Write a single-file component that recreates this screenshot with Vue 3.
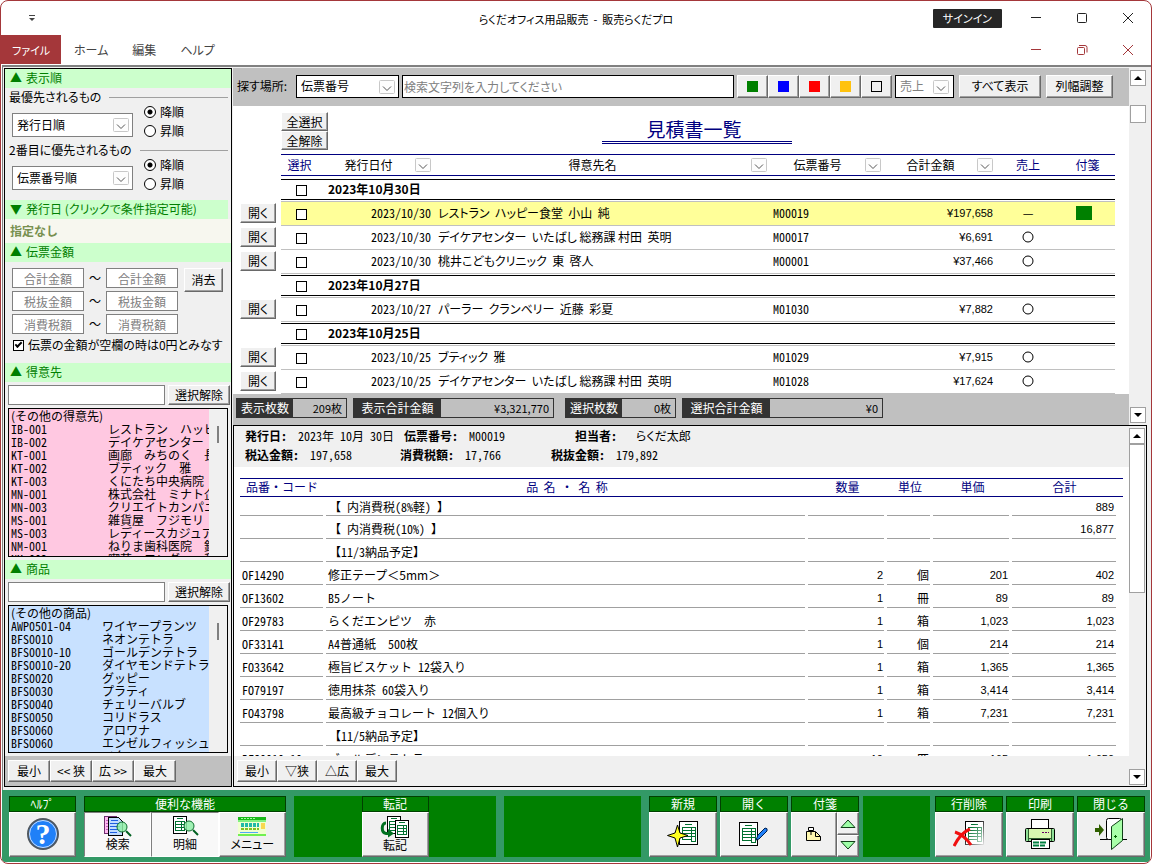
<script setup>
import { ref } from 'vue'

const place = ref('伝票番号')
const keyword = ref('')
const blankIsZero = ref(true)

const sorts = ref([
    { id: 'first', title: '最優先されるもの', field: '発行日順', order: 'desc' },
    { id: 'second', title: '2番目に優先されるもの', field: '伝票番号順', order: 'desc' },
])

const amounts = ['合計金額', '税抜金額', '消費税額']

const customers = [
    ['IB-001', 'レストラン　ハッピー食堂'],
    ['IB-002', 'デイケアセンター　いたばし'],
    ['KT-001', '画廊　みちのく　長谷川'],
    ['KT-002', 'ブティック　雅'],
    ['KT-003', 'くにたち中央病院'],
    ['MN-001', '株式会社　ミナト企画'],
    ['MN-003', 'クリエイトカンパニー'],
    ['MS-001', '雑貨屋　フジモリ'],
    ['MS-003', 'レディースカジュアル'],
    ['NM-001', 'ねりま歯科医院　鈴木'],
    ['NM-002', '喫茶　ロンダー　和'],
]

const products = [
    ['AWP0501-04', 'ワイヤープランツ'],
    ['BFS0010', 'ネオンテトラ'],
    ['BFS0010-10', 'ゴールデンテトラ'],
    ['BFS0010-20', 'ダイヤモンドテトラ'],
    ['BFS0020', 'グッピー'],
    ['BFS0030', 'プラティ'],
    ['BFS0040', 'チェリーバルブ'],
    ['BFS0050', 'コリドラス'],
    ['BFS0060', 'アロワナ'],
    ['BFS0060', 'エンゼルフィッシュ'],
    ['BFS0070', 'ベタ'],
]

const tagColors = ['green', 'blue', 'red', 'yellow', 'none']

const headers = ['発行日付', '得意先名', '伝票番号', '合計金額']

const slips = [
    { group: '2023年10月30日' },
    { date: '2023/10/30', name: 'レストラン  ハッピー食堂  小山  純', no: 'M00019', total: '197,658', sold: '—', tag: true, current: true },
    { date: '2023/10/30', name: 'デイケアセンター  いたばし 総務課 村田  英明', no: 'M00017', total: '6,691', sold: '○' },
    { date: '2023/10/30', name: '桃井こどもクリニック  東  啓人', no: 'M00001', total: '37,466', sold: '○' },
    { group: '2023年10月27日' },
    { date: '2023/10/27', name: 'パーラー  クランベリー  近藤  彩夏', no: 'M01030', total: '7,882', sold: '○' },
    { group: '2023年10月25日' },
    { date: '2023/10/25', name: 'ブティック  雅', no: 'M01029', total: '7,915', sold: '○' },
    { date: '2023/10/25', name: 'デイケアセンター  いたばし 総務課 村田  英明', no: 'M01028', total: '17,624', sold: '○' },
]

const totals = [
    { label: '表示枚数', value: '209枚' },
    { label: '表示合計金額', value: '¥3,321,770', wide: true },
    { label: '選択枚数', value: '0枚', gap: true },
    { label: '選択合計金額', value: '¥0', wide: true },
]

const items = [
    { name: '【 内消費税(8%軽) 】', sum: '889', note: true },
    { name: '【 内消費税(10%) 】', sum: '16,877', note: true },
    { name: '【11/3納品予定】', note: true },
    { code: 'OF14290', name: '修正テープ＜5mm＞', qty: '2', unit: '個', price: '201', sum: '402', full: true },
    { code: 'OF13602', name: 'B5ノート', qty: '1', unit: '冊', price: '89', sum: '89' },
    { code: 'OF29783', name: 'らくだエンピツ  赤', qty: '1', unit: '箱', price: '1,023', sum: '1,023' },
    { code: 'OF33141', name: 'A4普通紙  500枚', qty: '1', unit: '個', price: '214', sum: '214' },
    { code: 'FO33642', name: '極旨ビスケット 12袋入り', qty: '1', unit: '箱', price: '1,365', sum: '1,365' },
    { code: 'FO79197', name: '徳用抹茶 60袋入り', qty: '1', unit: '箱', price: '3,414', sum: '3,414' },
    { code: 'FO43798', name: '最高級チョコレート 12個入り', qty: '1', unit: '箱', price: '7,231', sum: '7,231' },
    { name: '【11/5納品予定】', note: true },
    { code: 'BFS0010-10', name: 'ゴールデンテトラ', qty: '10', unit: '匹', price: '165', sum: '1,650' },
]
</script>

<template>
    <div class="window">
        <svg class="defs" width="0" height="0" aria-hidden="true">
            <symbol id="sheet" viewBox="0 0 19 24">
                <g shape-rendering="crispEdges">
                    <rect x="0.5" y="0.5" width="18" height="23" fill="#fff" stroke="#000" />
                    <path d="M6 3.5h7M3 6.5h13M3 9.5h13M3 12.5h13M3 15.5h13M3 18.5h9M3.5 6v13M12.5 6v15M16.5 6v15M12 20.5h5" fill="none" stroke="#007030" />
                </g>
            </symbol>
            <symbol id="sheet-small" viewBox="0 0 14 18">
                <g shape-rendering="crispEdges">
                    <rect x="0.5" y="0.5" width="13" height="17" fill="#fff" stroke="#000" />
                    <path d="M4 2.5h6M2 5.5h10M2 8.5h10M2 11.5h10M2 14.5h10M2.500 5v10M8.500 5v10M11.500 5v10" fill="none" stroke="#007030" />
                </g>
            </symbol>
            <symbol id="lens" viewBox="0 0 16 16">
                <path d="M10 10l5 5" stroke="#006020" stroke-width="2" />
                <circle cx="6" cy="6" r="5" fill="#90f0a8" fill-opacity="0.85" stroke="#107030" />
            </symbol>
            <symbol id="chevron" viewBox="0 0 16 14">
                <rect x="0.5" y="0.5" width="15" height="13" rx="1" fill="#fdfdfd" stroke="#c8c8c8" />
                <path d="M4 6.5l4 4 4-4" fill="none" stroke="#555" />
            </symbol>
        </svg>

        <header class="titlebar">
            <svg class="quick" width="6" height="7"><path d="M0 0.5h6" stroke="#444" /><path d="M0 3h6L3 6z" fill="#444" /></svg>
            <h1>らくだオフィス用品販売&nbsp; -&nbsp; 販売らくだプロ</h1>
            <div class="win-buttons">
                <button class="signin">サインイン</button>
                <button aria-label="最小化"><svg width="12" height="12"><path d="M1 5.5h10" stroke="#222" /></svg></button>
                <button aria-label="最大化"><svg width="12" height="12"><rect x="1.5" y="1.5" width="9" height="9" rx="1" fill="none" stroke="#222" /></svg></button>
                <button aria-label="終了"><svg width="12" height="12"><path d="M1 1l10 10M11 1L1 11" stroke="#222" /></svg></button>
            </div>
        </header>
        <nav class="menubar">
            <button class="file">ファイル</button>
            <button>ホーム</button>
            <button>編集</button>
            <button>ヘルプ</button>
            <div class="win-buttons">
                <button aria-label="子を最小化"><svg width="12" height="12"><path d="M1 5.5h10" stroke="#a4373a" /></svg></button>
                <button aria-label="元に戻す"><svg width="12" height="12"><path d="M3 1.5h6a2 2 0 0 1 2 2v5" fill="none" stroke="#a4373a" /><rect x="1.5" y="3.5" width="7" height="7" rx="1" fill="none" stroke="#a4373a" /></svg></button>
                <button aria-label="閉じる"><svg width="12" height="12"><path d="M1 1l10 10M11 1L1 11" stroke="#a4373a" /></svg></button>
            </div>
        </nav>

        <main class="workspace">
            <aside class="sidebar">
                <h2 class="section"><span>▲</span>表示順</h2>
                <fieldset v-for="s in sorts" :key="s.id" class="sort">
                    <legend>{{ s.title }}</legend>
                    <div class="sort-row">
                        <span class="combo gray">
                            <select v-model="s.field" :aria-label="s.title">
                                <option>{{ s.field }}</option>
                            </select>
                            <svg width="16" height="14"><use href="#chevron" /></svg>
                        </span>
                        <span class="radios">
                            <label><input v-model="s.order" type="radio" :name="s.id" value="desc">降順</label>
                            <label><input v-model="s.order" type="radio" :name="s.id" value="asc">昇順</label>
                        </span>
                    </div>
                </fieldset>

                <h2 class="section issue"><span>▼</span>発行日 (クリックで条件指定可能)</h2>
                <p class="unset">指定なし</p>
                <h2 class="section"><span>▲</span>伝票金額</h2>
                <div class="ranges">
                    <div class="range-list">
                        <div v-for="a in amounts" :key="a" class="range">
                            <input :placeholder="a" :aria-label="a + ' 下限'">
                            <span>～</span>
                            <input :placeholder="a" :aria-label="a + ' 上限'">
                        </div>
                    </div>
                    <button class="btn clear">消去</button>
                </div>
                <label class="zero"><input v-model="blankIsZero" type="checkbox" class="tick"><span>伝票の金額が空欄の時は0円とみなす</span></label>

                <h2 class="section"><span>▲</span>得意先</h2>
                <div class="finder">
                    <input aria-label="得意先">
                    <button class="btn">選択解除</button>
                </div>
                <div class="listbox pink">
                    <ul>
                        <li>(その他の得意先)</li>
                        <li v-for="c in customers" :key="c[0]"><span>{{ c[0] }}</span>{{ c[1] }}</li>
                    </ul>
                    <i class="thumb"></i>
                </div>

                <h2 class="section"><span>▲</span>商品</h2>
                <div class="finder">
                    <input aria-label="商品">
                    <button class="btn">選択解除</button>
                </div>
                <div class="listbox sky">
                    <ul>
                        <li>(その他の商品)</li>
                        <li v-for="(p, i) in products" :key="i"><span>{{ p[0] }}</span>{{ p[1] }}</li>
                    </ul>
                    <i class="thumb"></i>
                </div>
                <div class="sizer dark">
                    <button class="btn">最小</button>
                    <button class="btn">&lt;&lt; 狭</button>
                    <button class="btn">広 &gt;&gt;</button>
                    <button class="btn">最大</button>
                </div>
            </aside>

            <div class="panes">
                <section class="upper">
                    <div class="upper-main">
                        <div class="toolbar">
                            <label for="place">探す場所:</label>
                            <span class="combo place">
                                <select id="place" v-model="place"><option>伝票番号</option></select>
                                <svg width="16" height="14"><use href="#chevron" /></svg>
                            </span>
                            <input v-model="keyword" class="search" placeholder="検索文字列を入力してください" aria-label="検索文字列">
                            <span class="tags">
                                <button v-for="c in tagColors" :key="c" class="btn" :aria-label="c"><i :class="['swatch', c]"></i></button>
                            </span>
                            <span class="combo sold">
                                <select aria-label="売上"><option>売上</option></select>
                                <svg width="16" height="14"><use href="#chevron" /></svg>
                            </span>
                            <button class="btn show-all">すべて表示</button>
                            <button class="btn fit">列幅調整</button>
                        </div>

                        <div class="list-head">
                            <div class="select-all">
                                <button class="btn">全選択</button>
                                <button class="btn">全解除</button>
                            </div>
                            <h2>見積書一覧</h2>
                        </div>

                        <div class="slips-wrap">
                            <table class="slips">
                                <colgroup>
                                    <col class="c-open"><col class="c-check"><col class="c-date"><col>
                                    <col class="c-no"><col class="c-total"><col class="c-sold"><col class="c-tag">
                                </colgroup>
                                <thead>
                                    <tr>
                                        <td></td>
                                        <th class="navy pick">選択</th>
                                        <th v-for="h in headers" :key="h">
                                            <div class="filter">
                                                <span>{{ h }}</span>
                                                <button :aria-label="h"><svg width="16" height="14"><use href="#chevron" /></svg></button>
                                            </div>
                                        </th>
                                        <th class="navy">売上</th>
                                        <th class="navy">付箋</th>
                                    </tr>
                                </thead>
                                <tbody>
                                    <tr class="spacer"><td colspan="8"></td></tr>
                                    <template v-for="(s, i) in slips" :key="i">
                                        <tr v-if="s.group" class="group">
                                            <td></td>
                                            <td><div class="band mid"><input type="checkbox" class="tick" :aria-label="s.group"></div></td>
                                            <td colspan="6"><div class="band">{{ s.group }}</div></td>
                                        </tr>
                                        <tr v-else :class="['slip', { current: s.current }]">
                                            <td class="open"><button class="btn">開く</button></td>
                                            <td class="mid"><input type="checkbox" class="tick" :aria-label="s.no"></td>
                                            <td class="right half">{{ s.date }}</td>
                                            <td class="name">{{ s.name }}</td>
                                            <td class="half">{{ s.no }}</td>
                                            <td class="right num">¥{{ s.total }}</td>
                                            <td class="mid">
                                                <svg v-if="s.sold === '○'" class="mark" width="12" height="12" role="img" aria-label="済"><circle cx="6" cy="6" r="5" fill="none" stroke="#000" /></svg>
                                                <template v-else>{{ s.sold }}</template>
                                            </td>
                                            <td class="mid"><i v-if="s.tag" class="flag"></i></td>
                                        </tr>
                                    </template>
                                </tbody>
                            </table>
                        </div>

                        <dl class="totals">
                            <div v-for="t in totals" :key="t.label" :class="{ wide: t.wide, gap: t.gap }">
                                <dt>{{ t.label }}</dt>
                                <dd>{{ t.value }}</dd>
                            </div>
                        </dl>
                    </div>
                    <div class="scrollbar">
                        <button aria-label="上へ"><svg width="8" height="4"><path d="M0 4L4 0l4 4z" /></svg></button>
                        <i class="grip short"></i>
                        <button class="down" aria-label="下へ"><svg width="8" height="4"><path d="M0 0h8L4 4z" /></svg></button>
                    </div>
                </section>

                <section class="lower">
                    <div class="lower-main">
                        <div class="summary">
                            <p><b>発行日:</b><span class="w-date">2023年 10月 30日</span><b>伝票番号:</b><span class="w-no">M00019</span><b>担当者:</b><span class="staff">らくだ太郎</span></p>
                            <p><b>税込金額:</b><span class="w-in">197,658</span><b>消費税額:</b><span class="w-tax">17,766</span><b>税抜金額:</b><span>179,892</span></p>
                        </div>
                        <div class="items-wrap">
                            <table class="items">
                                <colgroup>
                                    <col class="i-code"><col><col class="i-qty"><col class="i-unit"><col class="i-qty"><col class="i-sum">
                                </colgroup>
                                <thead>
                                    <tr>
                                        <th class="left">品番・コード</th>
                                        <th>品&nbsp; 名&nbsp; ・&nbsp; 名&nbsp; 称</th>
                                        <th>数量</th>
                                        <th>単位</th>
                                        <th>単価</th>
                                        <th class="total">合計</th>
                                    </tr>
                                </thead>
                                <tbody>
                                    <tr v-for="(r, i) in items" :key="i">
                                        <td class="half">{{ r.code }}</td>
                                        <td :class="['title', { half: !r.full, note: r.note }]">{{ r.name }}</td>
                                        <td class="right num">{{ r.qty }}</td>
                                        <td class="right">{{ r.unit }}</td>
                                        <td class="right num">{{ r.price }}</td>
                                        <td class="right num sum">{{ r.sum }}</td>
                                    </tr>
                                </tbody>
                            </table>
                        </div>
                        <div class="sizer">
                            <button class="btn">最小</button>
                            <button class="btn">▽狭</button>
                            <button class="btn">△広</button>
                            <button class="btn">最大</button>
                        </div>
                    </div>
                    <div class="scrollbar">
                        <button aria-label="上へ"><svg width="8" height="4"><path d="M0 4L4 0l4 4z" /></svg></button>
                        <i class="grip long"></i>
                        <button class="down" aria-label="下へ"><svg width="8" height="4"><path d="M0 0h8L4 4z" /></svg></button>
                    </div>
                </section>
            </div>
        </main>

        <footer class="commands">
            <div class="module">
                <h3>ﾍﾙﾌﾟ</h3>
                <div class="keys">
                    <button class="btn" aria-label="ヘルプ">
                        <svg width="34" height="34">
                            <circle cx="17" cy="17" r="15" fill="#2080f8" stroke="#505860" stroke-width="2" />
                            <circle cx="17" cy="17" r="13.5" fill="none" stroke="#c8dcf8" />
                            <text x="17" y="27" text-anchor="middle" fill="#fff" font-family="Liberation Serif, serif" font-weight="bold" font-size="30">?</text>
                        </svg>
                    </button>
                </div>
            </div>
            <div class="module triple">
                <h3>便利な機能</h3>
                <div class="keys">
                    <button class="btn pressed">
                        <svg width="28" height="21">
                            <g shape-rendering="crispEdges">
                                <rect x="0.5" y="0.5" width="12" height="17" fill="#ffb8f0" stroke="#703070" />
                                <path d="M2 4.5h2M2 7.5h2M2 10.5h2M2 13.5h2" stroke="#c060c0" />
                                <path d="M4.5 1.500h10l4 4v14h-14z" fill="#c0dcff" stroke="#000" />
                                <path d="M7 4.5h7M6 7.5h10M6 10.5h10M6 13.5h10M6 16.5h7" stroke="#2060e0" />
                            </g>
                            <use href="#lens" x="12" y="5" width="16" height="16" />
                        </svg>
                        検索
                    </button>
                    <button class="btn pressed">
                        <svg width="28" height="21">
                            <use href="#sheet-small" x="2" y="0" width="14" height="18" />
                            <use href="#lens" x="12" y="4" width="16" height="16" />
                        </svg>
                        明細
                    </button>
                    <button class="btn">
                        <svg width="28" height="20">
                            <path fill="#f0ffd0" d="M0 0h28v19H0z" />
                            <path fill="#18b818" d="M0 0h28v3H0z" />
                            <path fill="#80f080" d="M0 3h28v2H0z" />
                            <path d="M3 1.5h15" stroke="#a0ffa0" stroke-dasharray="2 1" />
                            <path d="M3 8h18" stroke="#20b8a8" stroke-width="4" stroke-dasharray="3 1" />
                            <path d="M3 12h18" stroke="#80c020" stroke-width="2" stroke-dasharray="3 1" />
                            <path fill="#f8d850" d="M23 6h4v6h-4z" />
                            <path fill="#50a8f8" d="M2 15h18v1H2z" />
                            <path fill="#70f050" d="M0 17h28v2H0z" />
                        </svg>
                        メニュー
                    </button>
                </div>
            </div>
            <div class="slot mid-slot">
                <div class="module">
                    <h3>転記</h3>
                    <div class="keys">
                        <button class="btn">
                            <svg width="30" height="22">
                                <use href="#sheet-small" x="7" y="0" width="14" height="18" />
                                <use href="#sheet-small" x="15" y="4" width="14" height="18" />
                                <path d="M6 7C1 7 1 17 6 17.5H9" fill="none" stroke="#007020" stroke-width="3" />
                                <path d="M8 13l6 4.5-6 4z" fill="#007020" />
                            </svg>
                            転記
                        </button>
                    </div>
                </div>
            </div>
            <div class="slot grow"></div>
            <div class="cluster">
                <div class="module">
                    <h3>新規</h3>
                    <div class="keys">
                        <button class="btn" aria-label="新規">
                            <svg width="32" height="30">
                                <use href="#sheet" x="12" y="2" width="19" height="24" />
                                <path d="M10.5 6l2.5 8 8 2.5-8 2.5-2.5 9L8 19l-7.500-2.5L8 14z" fill="#ffff20" stroke="#000" />
                            </svg>
                        </button>
                    </div>
                </div>
                <div class="module">
                    <h3>開く</h3>
                    <div class="keys">
                        <button class="btn" aria-label="開く">
                            <svg width="30" height="26">
                                <use href="#sheet" x="0" y="1" width="19" height="24" />
                                <path d="M17 19l2-5 7-7q3 0 2 3l-8 8z" fill="#2080f8" stroke="#002050" />
                            </svg>
                        </button>
                    </div>
                </div>
                <div class="module">
                    <h3>付箋</h3>
                    <div class="keys">
                        <button class="btn" aria-label="付箋">
                            <svg width="16" height="14">
                                <path d="M0.5 4.5h9l5 5v4h-14z" fill="#fff8b0" stroke="#000" />
                                <path d="M9.5 5v4.5h5" fill="none" stroke="#000" />
                                <path d="M2.5 0.5h5v3h-5zM5 4v4" fill="#fff" stroke="#000" />
                            </svg>
                        </button>
                        <span class="spin">
                            <button class="btn" aria-label="前の付箋"><svg width="16" height="9"><path d="M1 8.5L8 1l7 7.5z" fill="#a0ffa8" stroke="#104018" /></svg></button>
                            <button class="btn" aria-label="次の付箋"><svg width="16" height="9"><path d="M1 0.5h14L8 8z" fill="#a0ffa8" stroke="#104018" /></svg></button>
                        </span>
                    </div>
                </div>
            </div>
            <div class="slot narrow"></div>
            <div class="cluster last">
                <div class="module">
                    <h3>行削除</h3>
                    <div class="keys">
                        <button class="btn" aria-label="行削除">
                            <svg width="32" height="28">
                                <defs>
                                    <linearGradient id="fade" x1="0" y1="0" x2="1" y2="1">
                                        <stop offset="0.3" stop-color="#fff" stop-opacity="0" />
                                        <stop offset="1" stop-color="#fff" stop-opacity="0.9" />
                                    </linearGradient>
                                </defs>
                                <use href="#sheet" x="12" y="1" width="19" height="24" />
                                <rect x="12" y="1" width="19" height="24" fill="url(#fade)" />
                                <path d="M1 26C5 18 10 12 17 9M2 12C8 14 14 19 18 25" fill="none" stroke="#f01010" stroke-width="3" />
                            </svg>
                        </button>
                    </div>
                </div>
                <div class="module">
                    <h3>印刷</h3>
                    <div class="keys">
                        <button class="btn" aria-label="印刷">
                            <svg width="32" height="30">
                                <rect x="7.5" y="0.5" width="17" height="10" fill="#fff" stroke="#000" />
                                <rect x="1.5" y="9.5" width="29" height="13" rx="1" fill="#90e098" stroke="#000" />
                                <rect x="5" y="10" width="22" height="9" fill="#d8f8b0" />
                                <path d="M4.5 10v12M27.5 10v12M5 19.5h22" stroke="#306030" />
                                <path d="M18 13.5h7" stroke="#606" stroke-dasharray="2 1" />
                                <rect x="7.5" y="20.5" width="18" height="9" fill="#fff" stroke="#000" />
                                <path d="M9 23.5h14M9 26.5h12" stroke="#008040" stroke-width="2" stroke-dasharray="6 1" />
                            </svg>
                        </button>
                    </div>
                </div>
                <div class="module">
                    <h3>閉じる</h3>
                    <div class="keys">
                        <button class="btn" aria-label="閉じる">
                            <svg width="34" height="34">
                                <path d="M1 11h4V7l5 6-5 6v-4H1z" fill="#306000" />
                                <path d="M6 22.5h27" stroke="#000" />
                                <rect x="12.5" y="1.5" width="15" height="21" rx="2" fill="#fff" stroke="#000" />
                                <path d="M17.5 9.5l11-8v22l-11 9z" fill="#a8ffa8" stroke="#104018" />
                                <path d="M20 19.5h3M21.5 18v3" stroke="#006000" />
                            </svg>
                        </button>
                    </div>
                </div>
            </div>
        </footer>
    </div>
</template>

<style>
body {
    margin: 0;
    background: #fff;
}
</style>

<style scoped>
.window {
    display: flex;
    flex-direction: column;
    box-sizing: border-box;
    height: 100vh;
    border: 1px solid #a4373a;
    border-radius: 8px;
    overflow: hidden;
    background: #fff;
    color: #000;
    font-family: "Noto Sans CJK JP", sans-serif;
    font-size: 12px;
    line-height: 16px;
    font-feature-settings: "palt";
}

.window *,
.window *::before {
    box-sizing: border-box;
}

.defs {
    position: absolute;
}

h1, h2, h3, p, ul, dl, dd, fieldset {
    margin: 0;
    padding: 0;
    font-size: 12px;
    font-weight: normal;
}

button, input, select {
    margin: 0;
    padding: 0;
    border: 0;
    border-radius: 0;
    background: none;
    color: inherit;
    font: inherit;
    font-feature-settings: inherit;
}

svg {
    display: block;
    flex: none;
}

.half {
    font-feature-settings: "hwid";
}

.num {
    font-family: "Liberation Sans", "Noto Sans CJK JP", sans-serif;
    font-size: 11px;
}

.right {
    text-align: right;
}

.mid {
    text-align: center;
}

.btn {
    display: flex;
    align-items: center;
    justify-content: center;
    border: 1px solid;
    border-color: #fff #696969 #696969 #fff;
    box-shadow: inset -1px -1px #a0a0a0;
    background: #f0f0f0;
    white-space: nowrap;
}

/* title and menu */
.titlebar {
    display: grid;
    grid-template-columns: 1fr auto 1fr;
    align-items: center;
    height: 34px;
    flex: none;
}

.titlebar h1 {
    padding-top: 2px;
    font-size: 11px;
}

.quick {
    margin-left: 28px;
}

.win-buttons {
    display: flex;
    justify-content: flex-end;
    align-items: center;
    margin-left: auto;
    padding-right: 17px;
    gap: 34px;
}

.win-buttons .signin {
    height: 19px;
    padding: 0 10px;
    margin-right: -6px;
    border-radius: 1px;
    background: #262626;
    color: #fff;
    font-size: 11px;
    line-height: 19px;
}

.menubar {
    display: flex;
    flex: none;
    height: 30px;
    color: #444;
}

.menubar > button {
    padding: 0 11px;
    margin-right: 2px;
    white-space: nowrap;
}

.menubar .file {
    width: 60px;
    height: 29px;
    padding: 0;
    background: #a4373a;
    color: #fff;
    font-size: 11px;
}

/* work area */
.workspace {
    display: flex;
    flex: 1;
    min-height: 0;
    gap: 1px;
    margin: 0 0 0 1px;
    padding: 1px 4px 3px 1px;
    border-top: 2px solid #808080;
    border-left: 1px solid #808080;
    background: #f0f0f0;
}

.sidebar {
    display: flex;
    flex-direction: column;
    width: 228px;
    flex: none;
    border: 1px solid #000;
}

.section {
    flex: none;
    display: flex;
    padding-left: 5px;
    height: 19px;
    line-height: 18px;
    background: #ccffcc;
    color: #008000;
    white-space: nowrap;
}

.section span {
    width: 16px;
}

.section.issue {
    margin: 6px 3px 0 0;
}

.sort {
    border: 0;
    padding: 0 3px 0 4px;
}

.sort legend {
    display: flex;
    align-items: center;
    gap: 8px;
    width: 100%;
    height: 18px;
    padding: 0;
}

.sort legend::after {
    content: '';
    flex: 1;
    height: 1px;
    background: #a0a0a0;
}

.sort-row {
    display: flex;
    align-items: flex-start;
    gap: 11px;
    height: 35px;
    padding-left: 3px;
}

.combo {
    position: relative;
    display: block;
    border: 1px solid #000;
    background: #fff;
    height: 23px;
}

.combo select {
    appearance: none;
    width: 100%;
    height: 100%;
    padding-left: 4px;
}

.combo svg {
    position: absolute;
    right: 3px;
    top: 4px;
    pointer-events: none;
}

.combo.gray {
    width: 121px;
    height: 24px;
    margin-top: 7px;
    border-color: #808080;
}

.radios {
    display: flex;
    flex-direction: column;
    gap: 1px;
    margin-top: -3px;
}

.radios label {
    display: flex;
    align-items: center;
    gap: 4px;
    height: 18px;
}

.radios input {
    appearance: none;
    width: 12px;
    height: 12px;
    border: 1px solid #000;
    border-radius: 50%;
    background: #fff;
}

.radios input:checked {
    background: radial-gradient(#000 2px, #fff 3px);
}

.unset {
    flex: none;
    height: 24px;
    padding-left: 5px;
    background: #f7f7ef;
    color: #789050;
    font-weight: bold;
    line-height: 23px;
    font-feature-settings: normal;
}

.ranges {
    display: flex;
    gap: 6px;
    padding: 6px 7px 0;
}

.range-list {
    display: flex;
    flex-direction: column;
    gap: 3px;
}

.range {
    display: flex;
    align-items: center;
}

.range input {
    width: 72px;
    height: 20px;
    border: 1px solid #808080;
    background: #fff;
    text-align: center;
}

.range span {
    width: 22px;
    text-align: center;
}

input::placeholder {
    color: #808080;
    opacity: 1;
}

.clear {
    width: 39px;
    height: 24px;
}

.zero {
    display: flex;
    align-items: center;
    gap: 4px;
    padding: 3px 8px 10px;
    white-space: nowrap;
}

.tick {
    appearance: none;
    position: relative;
    width: 11px;
    height: 11px;
    flex: none;
    border: 1px solid #000;
    background: #fff;
    vertical-align: middle;
}

.tick:checked::before {
    content: '';
    position: absolute;
    left: 1px;
    top: 1px;
    width: 7px;
    height: 4px;
    border: solid #000;
    border-width: 0 0 2px 2px;
    transform: rotate(-45deg);
}

.finder {
    display: flex;
    flex: none;
    gap: 3px;
    padding: 3px 1px 0 3px;
}

.finder input {
    flex: 1;
    min-width: 0;
    height: 20px;
    border: 1px solid #808080;
    background: #fff;
}

.finder .btn {
    width: 62px;
    height: 20px;
}

.listbox {
    position: relative;
    flex: none;
    height: 149px;
    margin: 3px;
    padding-right: 18px;
    border: 1px solid #000;
    overflow: hidden;
}

.listbox ul {
    height: 100%;
    overflow: hidden;
    list-style: none;
    font-feature-settings: normal;
}

.listbox li {
    display: flex;
    padding-left: 2px;
    line-height: 13px;
    height: 13px;
    white-space: nowrap;
}

.listbox span {
    width: 97px;
    flex: none;
    font-feature-settings: "hwid";
}

.pink ul {
    background: #ffc8e1;
}

.sky ul {
    background: #c8e1ff;
}

.sky span {
    width: 91px;
}

.listbox.sky {
    flex: 1;
    min-height: 0;
}

.thumb {
    position: absolute;
    right: 8px;
    top: 17px;
    width: 2px;
    height: 17px;
    background: #808080;
}

.sizer {
    display: flex;
    flex: none;
    height: 30px;
    padding: 4px 3px;
    background: #f0f0f0;
}

.sizer.dark {
    background: #c0c0c0;
}

.sizer .btn {
    width: 40px;
}

.sizer.dark .btn {
    width: 42px;
}

/* list pane */
.panes {
    display: flex;
    flex-direction: column;
    flex: 1;
    min-width: 0;
}

.upper {
    display: flex;
    flex: none;
}

.upper-main {
    flex: 1;
    min-width: 0;
    background: #fff;
}

.toolbar {
    display: flex;
    align-items: center;
    gap: 3px;
    height: 38px;
    padding: 0 16px 2px 4px;
    background: #c0c0c0;
}

.toolbar label {
    width: 56px;
    white-space: nowrap;
}

.place {
    width: 103px;
}

.search {
    flex: 1;
    min-width: 0;
    height: 23px;
    padding-left: 1px;
    border: 1px solid #000;
    background: #fff;
}

.tags {
    display: flex;
}

.tags .btn {
    width: 31px;
    height: 23px;
}

.swatch {
    width: 11px;
    height: 11px;
}

.green {
    background: #008000;
}

.blue {
    background: #0000ff;
}

.red {
    background: #ff0000;
}

.yellow {
    background: #ffc20e;
}

.none {
    border: 1px solid #000;
}

.combo.sold {
    width: 59px;
    color: #808080;
}

.combo.sold svg {
    right: 4px;
}

.show-all, .fit {
    width: 82px;
    height: 23px;
    margin-left: 2px;
}

.fit {
    width: 67px;
}

.list-head {
    display: grid;
    grid-template-columns: 1fr 190px 1fr;
    align-items: start;
    height: 48px;
    padding: 6px 16px 0 48px;
}

.select-all .btn {
    width: 47px;
    height: 19px;
}

.list-head h2 {
    height: 32px;
    padding-right: 6px;
    border-bottom: 3px double #000080;
    color: #000080;
    font-size: 19px;
    line-height: 34px;
    text-align: center;
    font-feature-settings: normal;
}

.slips-wrap {
    padding-right: 14px;
}

table {
    width: 100%;
    table-layout: fixed;
    border-collapse: separate;
    border-spacing: 0;
}

th, td {
    padding: 0;
    font-weight: normal;
    overflow: hidden;
    white-space: nowrap;
}

.c-open { width: 48px; }
.c-check { width: 41px; }
.c-date { width: 112px; }
.c-no { width: 114px; }
.c-total { width: 112px; }
.c-sold { width: 64px; }
.c-tag { width: 55px; }

.slips th {
    height: 22px;
    border: solid #000080;
    border-width: 1px 0;
}

.slips .navy {
    color: #000080;
}

.slips .pick {
    padding-right: 4px;
}

.filter {
    display: flex;
    align-items: center;
    padding-right: 3px;
}

.filter span {
    flex: 1;
}

.spacer td {
    height: 2px;
}

.slips tbody tr:not(.spacer) > td {
    height: 24px;
    border-bottom: 1px solid #c0c0c0;
}

.slips tbody tr > td:first-child {
    border-bottom-color: transparent !important;
}

.slips .slip td {
    padding-bottom: 2px;
}

.slips td.open {
    padding: 0 0 2px 7px;
}

.open .btn {
    width: 36px;
    height: 20px;
}

.slips .name {
    padding-left: 4px;
    white-space: pre;
}

.slips td.half {
    padding-left: 3px;
    padding-right: 3px;
}

.slips td.num {
    padding-right: 3px;
}

.band {
    height: 21px;
    padding-left: 6px;
    border: solid #000;
    border-width: 1px 0;
    font-weight: bold;
    line-height: 17px;
}

.band.mid {
    padding: 0;
}

.current td:not(:first-child) {
    background: #ffff99;
    background-clip: padding-box;
}

.mark {
    margin: 0 auto;
}

.flag {
    display: block;
    width: 16px;
    height: 14px;
    margin: 0 auto;
    background: #008000;
}

.slip td:last-child {
    padding-right: 8px;
}

.totals {
    display: flex;
    height: 31px;
    padding: 4px 3px 7px;
    gap: 6px;
    background: #c0c0c0;
}

.totals div {
    display: flex;
    width: 111px;
    border: 1px solid #333;
    line-height: 18px;
}

.totals div.wide {
    width: 201px;
}

.totals div.gap {
    margin-left: 5px;
}

.totals dt {
    width: 56px;
    background: #333;
    color: #fff;
    text-align: center;
    white-space: nowrap;
}

.totals .wide dt {
    width: 87px;
}

.totals dd {
    flex: 1;
    padding-right: 4px;
    text-align: right;
    font-size: 11px;
}

.scrollbar {
    display: flex;
    flex-direction: column;
    width: 18px;
    flex: none;
    padding: 2px 1px;
    background: #f0f0f0;
}

.scrollbar button {
    display: flex;
    align-items: center;
    justify-content: center;
    width: 16px;
    height: 16px;
    border: 1px solid #a0a0a0;
    background: #fff;
}

.scrollbar .down {
    margin-top: auto;
}

.grip {
    width: 16px;
    border: 1px solid #a0a0a0;
    background: #fff;
}

.short {
    height: 18px;
    margin-top: 19px;
}

.long {
    height: 149px;
}

/* detail pane */
.lower {
    display: flex;
    flex: 1;
    min-height: 0;
    border: 1px solid #000;
}

.lower .scrollbar {
    width: 17px;
    padding: 2px 0 1px;
}

.lower-main {
    display: flex;
    flex-direction: column;
    flex: 1;
    min-width: 0;
    background: #fff;
}

.summary {
    flex: none;
    height: 41px;
    padding: 0 11px;
    background: #f0f0f0;
    font-feature-settings: "hwid";
}

.summary p {
    display: flex;
    line-height: 19px;
    white-space: nowrap;
}

.summary b {
    margin-right: 11px;
}

.w-date { width: 106px; }
.w-no { width: 106px; }
.w-in { width: 90px; }
.w-tax { width: 86px; }

.staff {
    margin-left: 8px;
    font-feature-settings: "palt";
}

.items-wrap {
    flex: 1;
    min-height: 0;
    overflow: hidden;
    padding: 11px 6px 0;
}

.i-code { width: 86px; }
.i-qty { width: 79px; }
.i-unit { width: 46px; }
.i-sum { width: 111px; }

.items th {
    height: 19px;
    padding-bottom: 2px;
    border: solid #000080;
    border-width: 1px 0;
    color: #000080;
    line-height: 14px;
    font-feature-settings: normal;
}

.items .left {
    padding-left: 6px;
    text-align: left;
}

.items .total {
    padding-right: 6px;
}

.items td {
    height: 23px;
    padding: 2px 4px 0 2px;
    background: linear-gradient(#a0a0a0, #a0a0a0) left bottom / calc(100% - 3px) 1px no-repeat;
}

.items tbody tr:first-child td {
    height: 19px;
    padding-top: 0;
}

.items td.title {
    white-space: pre;
    font-feature-settings: normal;
}

.items td.title.half {
    font-feature-settings: "hwid";
}

.items td.sum {
    padding-right: 9px;
    background-size: calc(100% - 7px) 1px;
}

.items td.note {
    padding-left: 3px;
}

/* command bar */
.commands {
    display: flex;
    flex: none;
    gap: 8px;
    margin: 0 1px 1px;
    padding: 6px 5px 5px 7px;
    background: #339966;
}

.module {
    width: 67px;
    flex: none;
}

.module h3 {
    height: 16px;
    border: 1px solid #004000;
    background: #008000;
    color: #fff;
    line-height: 14px;
    text-align: center;
    font-feature-settings: "hwid";
}

.triple {
    width: 202px;
}

.keys {
    display: flex;
}

.keys > .btn {
    flex: 1;
    flex-direction: column;
    height: 45px;
    padding-bottom: 2px;
    line-height: 14px;
}

.keys .pressed {
    border-color: #808080 #fff #fff #808080;
    box-shadow: none;
    background: #f8f8f8;
}

.slot {
    background: #008000;
}

.mid-slot {
    display: flex;
    justify-content: center;
    width: 202px;
}

.grow {
    flex: 1;
}

.narrow {
    width: 67px;
    margin-left: -4px;
}

.cluster {
    display: flex;
    gap: 3px;
}

.cluster .module {
    width: 68px;
}

.last {
    margin-left: -3px;
}

.spin {
    display: flex;
    flex-direction: column;
    width: 22px;
}

.spin .btn {
    flex: 1;
}
</style>
